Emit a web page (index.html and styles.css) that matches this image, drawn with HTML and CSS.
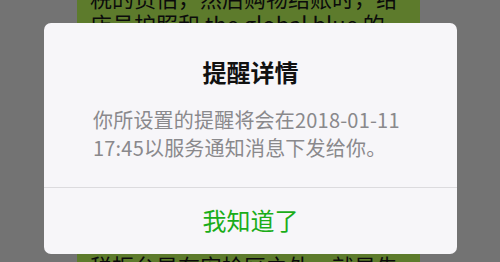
FILE: index.html
```html
<!DOCTYPE html>
<html lang="zh-CN">
<head>
<meta charset="utf-8">
<link rel="stylesheet" href="styles.css">
</head>
<body>
<div class="page">
  <div class="bubble">
    <p class="line">税的货估，然后购物结账时，给</p>
    <p class="line">店员护照和 the global blue 的</p>
    <div class="hidden-lines"></div>
    <p class="line">税柜台是在安检区之外，就是先</p>
  </div>
  <div class="dialog">
    <div class="dialog-body">
      <h1 class="dialog-title">提醒详情</h1>
      <p class="dialog-text">你所设置的提醒将会在2018-01-11<br>17:45以服务通知消息下发给你。</p>
    </div>
    <div class="dialog-footer">
      <span class="dialog-btn">我知道了</span>
    </div>
  </div>
</div>
</body>
</html>
```

FILE: styles.css
```css
html, body {
  margin: 0;
  padding: 0;
}
body {
  width: 500px;
  height: 262px;
  overflow: hidden;
  background: #737373;
  font-family: "Noto Sans CJK SC", "Noto Sans", sans-serif;
}
.page {
  position: relative;
  width: 500px;
  height: 262px;
  overflow: hidden;
}
.bubble {
  margin-left: 77px;
  width: 343px;
  margin-top: -16px;
  background: #5d7b2c;
  padding-left: 13px;
  box-sizing: border-box;
}
.line {
  margin: 0;
  font-size: 22px;
  line-height: 26px;
  color: #0b0b0b;
  white-space: nowrap;
}
.hidden-lines {
  height: 216px;
}
.dialog {
  position: absolute;
  left: 44px;
  top: 23px;
  width: 413px;
  height: 231px;
  background: #f7f6f9;
  border-radius: 7px;
  display: flex;
  flex-direction: column;
  overflow: hidden;
}
.dialog-body {
  padding: 34px 0 25px 49px;
  border-bottom: 1px solid #dcdbde;
}
.dialog-title {
  margin: 0 0 19px -49px;
  text-align: center;
  font-size: 24px;
  line-height: 30px;
  font-weight: 700;
  color: #111;
}
.dialog-text {
  margin: 0;
  font-size: 20px;
  line-height: 28px;
  color: #8a898c;
  white-space: nowrap;
  letter-spacing: 0.2px;
}
.dialog-footer {
  flex: 1;
  display: flex;
  align-items: center;
  justify-content: center;
  padding-bottom: 3px;
}
.dialog-btn {
  font-size: 24px;
  line-height: 30px;
  color: #1aad19;
}
```
